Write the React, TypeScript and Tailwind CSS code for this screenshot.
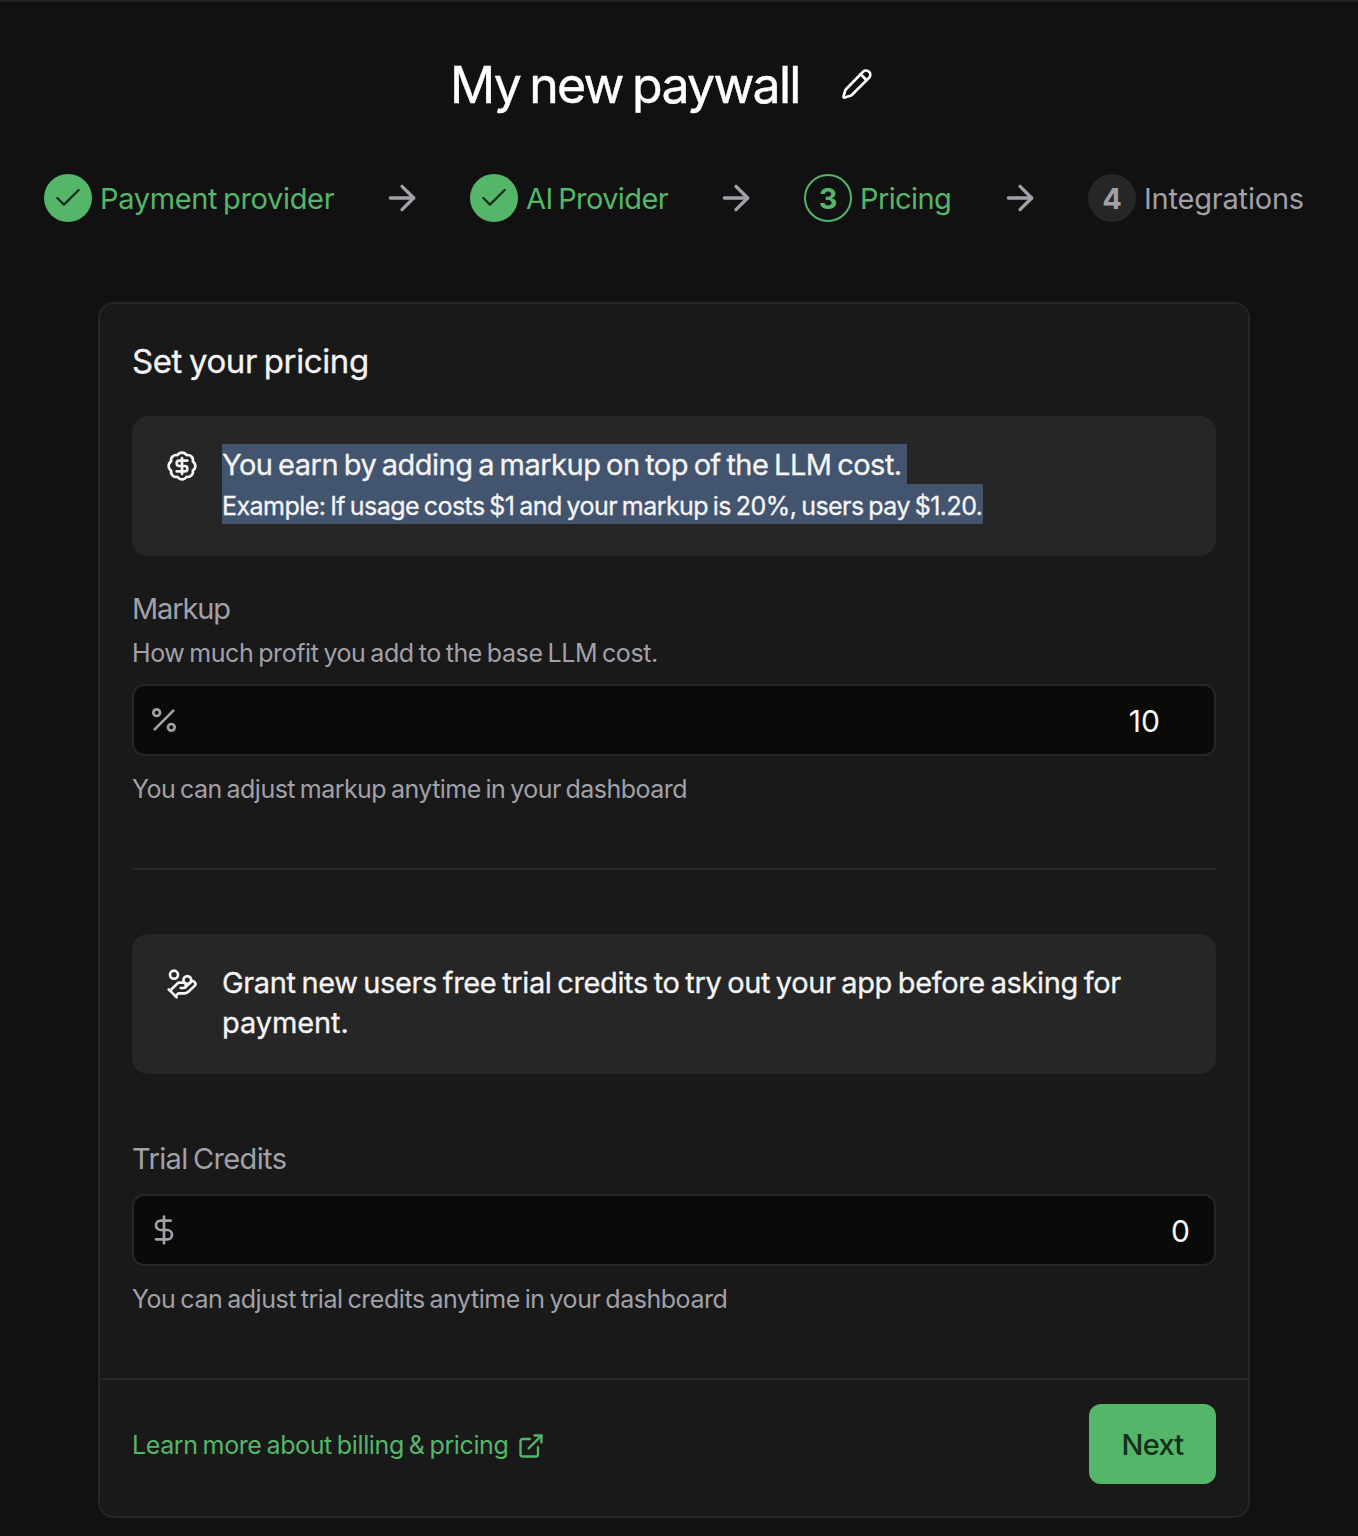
import {
  ArrowRight,
  BadgeDollarSign,
  Check,
  DollarSign,
  ExternalLink,
  HandCoins,
  Percent,
} from "lucide-react";
import type { ReactNode } from "react";

type StepState = "done" | "current" | "upcoming";

const badgeStyles: Record<StepState, string> = {
  done: "bg-[#55b66a] text-[#14301c]",
  current: "border-2 border-[#55b66a] text-[#55b66a]",
  upcoming: "bg-[#262626] text-[#a1a1aa]",
};

function Step({
  state,
  number,
  label,
  width,
  tracking,
}: {
  state: StepState;
  number: number;
  label: string;
  width: string;
  tracking: string;
}) {
  return (
    <div className={`flex shrink-0 items-center gap-2 ${width}`}>
      <div
        className={`flex size-12 shrink-0 items-center justify-center rounded-full text-[29px] leading-none font-bold ${badgeStyles[state]}`}
      >
        {state === "done" ? <Check size={32} strokeWidth={1.75} /> : number}
      </div>
      <span
        className={`pt-0.5 text-[29px] leading-10 whitespace-nowrap [word-spacing:-2px] ${tracking} ${
          state === "upcoming" ? "text-[#a1a1aa]" : "text-[#55b66a]"
        }`}
      >
        {label}
      </span>
    </div>
  );
}

function StepArrow() {
  return <ArrowRight size={40} className="shrink-0 text-[#a1a1aa]" />;
}

function PencilIcon() {
  return (
    <svg
      width="50"
      height="50"
      viewBox="0 0 50 50"
      fill="none"
      stroke="currentColor"
      strokeWidth="2.7"
      strokeLinecap="round"
      strokeLinejoin="round"
    >
      <path d="M31.2 11.6a4.25 4.25 0 0 1 6 6L20 34.8a4 4 0 0 1-1.6 1l-5.8 1.7a.9.9 0 0 1-1.1-1.1l1.7-5.8a4 4 0 0 1 1-1.6z" />
      <path d="m28.6 14.2 6 6" />
    </svg>
  );
}

function InfoBox({ icon, children }: { icon: ReactNode; children: ReactNode }) {
  return (
    <div className="flex h-[140px] items-start gap-6 rounded-2xl bg-[#262626] pt-7 pl-[34px] text-[#f4f4f5]">
      <div className="mt-1.5 shrink-0">{icon}</div>
      <div className="text-[29px] leading-10 whitespace-nowrap">{children}</div>
    </div>
  );
}

function NumberField({ icon, value, pad }: { icon: ReactNode; value: string; pad: string }) {
  return (
    <div
      className={`flex h-[72px] items-center justify-between rounded-xl border-2 border-[#262627] bg-[#0a0a08] pl-3.5 text-[#a1a1aa] ${pad}`}
    >
      {icon}
      <span className="pt-0.5 text-[30px] leading-10 text-[#fafafa]">{value}</span>
    </div>
  );
}

export default function App() {
  return (
    <div className="h-[1536px] w-[1358px] overflow-hidden border-t-2 border-[#222222] bg-[#111111] font-['Inter',sans-serif]">
      <header className="flex h-[172px] flex-col">
        <div className="flex items-center pt-[53px] pl-[450px]">
          <h1 className="w-[382px] text-[50px] leading-[60px] tracking-[-1.75px] whitespace-nowrap text-white [word-spacing:-3px] [-webkit-text-stroke:0.4px_white]">
            My new paywall
          </h1>
          <button className="text-white" aria-label="Rename paywall">
            <PencilIcon />
          </button>
        </div>
      </header>

      <nav className="flex h-12 items-center gap-12 pl-11">
        <Step state="done" number={1} label="Payment provider" width="w-[290px]" tracking="tracking-[-0.34px]" />
        <StepArrow />
        <Step state="done" number={2} label="AI Provider" width="w-[198px]" tracking="tracking-[-0.6px]" />
        <StepArrow />
        <Step state="current" number={3} label="Pricing" width="w-[148px]" tracking="tracking-[-0.6px]" />
        <StepArrow />
        <Step state="upcoming" number={4} label="Integrations" width="w-[220px]" tracking="tracking-[-0.2px]" />
      </nav>

      <main className="mt-20 ml-[98px] flex h-[1216px] w-[1152px] flex-col rounded-2xl border-2 border-[#262626] bg-[#191919]">
        <section className="flex h-[1074px] flex-col px-8 pt-[35px] text-[#a1a1aa]">
          <h2 className="text-[33px] leading-[44px] tracking-[-0.4px] text-[#f4f4f5] [word-spacing:-2px] [-webkit-text-stroke:0.3px_#f4f4f5]">
            Set your pricing
          </h2>

          <div className="mt-[33px]">
            <InfoBox icon={<BadgeDollarSign size={32} />}>
              <p className="h-10 w-[685px] bg-[#43546f] pt-px tracking-[-0.51px] [word-spacing:-2px] [-webkit-text-stroke:0.3px_#f4f4f5]">
                You earn by adding a markup on top of the LLM cost.
              </p>
              <p className="h-10 w-[761px] bg-[#43546f] pt-0.5 text-[25px] tracking-[-0.55px] [word-spacing:-1.7px] [-webkit-text-stroke:0.3px_#f4f4f5]">
                Example: If usage costs $1 and your markup is 20%, users pay $1.20.
              </p>
            </InfoBox>
          </div>

          <label className="mt-[33px] text-[29px] leading-10 tracking-[-1.15px]">Markup</label>
          <p className="mt-1.5 text-[25px] leading-9 tracking-[-0.42px] [word-spacing:-1.7px]">
            How much profit you add to the base LLM cost.
          </p>
          <div className="mt-[13px]">
            <NumberField icon={<Percent size={32} />} value="10" pad="pr-[54px]" />
          </div>
          <p className="mt-[15px] text-[25px] leading-9 tracking-[-0.53px] [word-spacing:-1.7px]">
            You can adjust markup anytime in your dashboard
          </p>

          <hr className="mt-[61px] mb-16 border-t-2 border-[#262626]" />

          <InfoBox icon={<HandCoins size={32} />}>
            <p className="pt-px tracking-[-0.37px] [word-spacing:-2px] [-webkit-text-stroke:0.3px_#f4f4f5]">
              Grant new users free trial credits to try out your app before asking for
              <br />
              <span className="tracking-[-0.1px]">payment.</span>
            </p>
          </InfoBox>

          <label className="mt-[65px] text-[29px] leading-10 tracking-[-0.65px] [word-spacing:-2px]">
            Trial Credits
          </label>
          <div className="mt-[15px]">
            <NumberField icon={<DollarSign size={32} />} value="0" pad="pr-6" />
          </div>
          <p className="mt-[15px] text-[25px] leading-9 tracking-[-0.46px] [word-spacing:-1.7px]">
            You can adjust trial credits anytime in your dashboard
          </p>
        </section>

        <footer className="flex h-[138px] items-start justify-between border-t-2 border-[#262626] px-8 pt-6">
          <a className="mt-6 flex items-center text-[#55b66a]">
            <span className="w-[385px] pb-0.5 text-[25px] leading-[34px] tracking-[-0.38px] whitespace-nowrap [word-spacing:-1.7px]">
              Learn more about billing &amp; pricing
            </span>
            <ExternalLink size={28} />
          </a>
          <button className="h-20 w-[127px] rounded-xl bg-[#55b66a] pt-0.5 text-[29px] font-medium tracking-[-0.7px] text-[#14301c]">
            Next
          </button>
        </footer>
      </main>
    </div>
  );
}
